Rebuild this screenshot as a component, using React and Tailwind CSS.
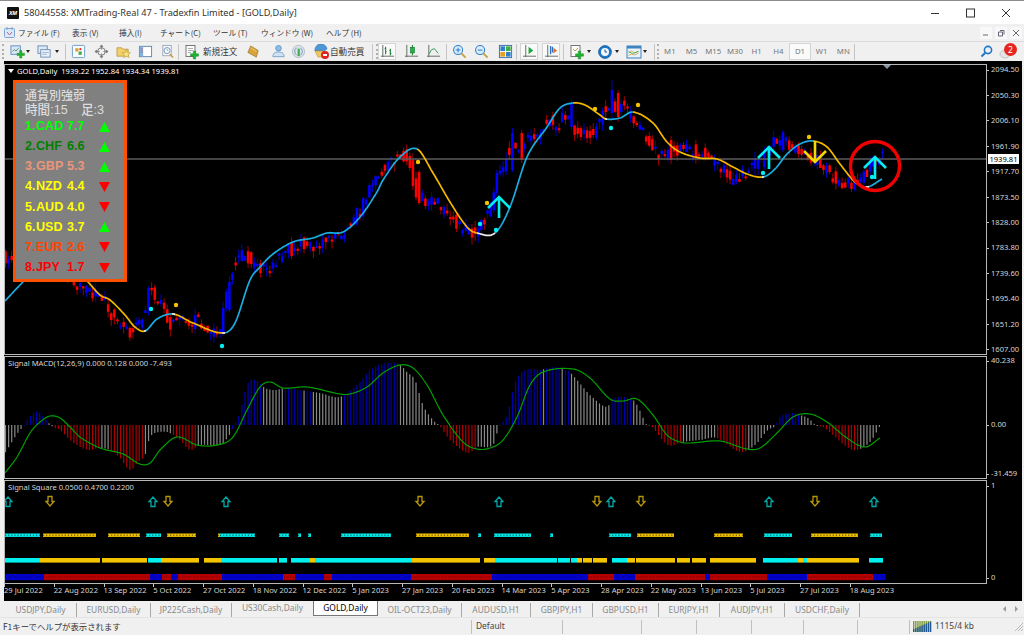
import React from "react";

// ---------- chart data (page px coordinates) ----------
const STEP = 3.11;
const BAR_X = Array.from({ length: 283 }, (_, i) => 5.5 + STEP * i);

// catmull-rom style interpolation over x
const curve = (pts) => (x) => {
  let i = 0;
  while (i < pts.length - 2 && x > pts[i + 1][0]) i++;
  const p1 = pts[i];
  const p2 = pts[i + 1];
  const p0 = pts[i - 1] || p1;
  const p3 = pts[i + 2] || p2;
  const h = p2[0] - p1[0];
  const t = Math.min(1, Math.max(0, (x - p1[0]) / h));
  const m1 = ((p2[1] - p0[1]) / (p2[0] - p0[0])) * h;
  const m2 = ((p3[1] - p1[1]) / (p3[0] - p1[0])) * h;
  const t2 = t * t;
  const t3 = t2 * t;
  return (2 * t3 - 3 * t2 + 1) * p1[1] + (t3 - 2 * t2 + t) * m1 + (-2 * t3 + 3 * t2) * p2[1] + (t3 - t2) * m2;
};

const MA_PTS = [[5,301],[20,285],[40,265],[60,265],[75,270],[88,282],[100,295],[110,300],[125,315],[135,327],[145,331],[157,319],[173,314],[193,323],[223,333],[235,323],[250,280],[260,267],[273,254],[293,242],[313,238],[327,233],[343,232],[360,217],[377,192],[383,180],[400,157],[417,149],[433,173],[450,202],[467,227],[477,233],[495,233],[510,207],[527,157],[547,127],[560,108],[573,103],[585,105],[600,115],[606,119],[620,118],[633,112],[653,123],[667,142],[680,152],[700,158],[717,159],[733,167],[747,174],[763,177],[775,169],[787,154],[800,144],[813,141],[827,147],[840,164],[855,182],[867,187],[882,179]];

const MA_GOLD = [[60,145],[173,223],[417,477],[573,606],[633,763],[813,867]];
const MA_BLUE = [[5,60],[145,173],[223,417],[495,573],[606,633],[763,813],[867,882]];
const MA_WHITE = [[477,495],[172,175],[222,225],[144,146],[762,764],[866,869],[605,607]];

const CANDLE_PTS = [[5,258],[40,245],[60,265],[75,285],[90,290],[105,298],[115,315],[125,325],[135,332],[145,320],[152,293],[158,298],[165,305],[172,322],[180,320],[190,325],[200,320],[210,328],[220,335],[226,310],[232,280],[238,262],[248,256],[256,266],[266,270],[275,268],[288,248],[295,252],[308,242],[316,246],[330,237],[342,235],[352,222],[362,212],[372,190],[385,170],[395,160],[405,155],[412,160],[418,188],[426,198],[434,200],[441,205],[448,212],[456,220],[463,228],[470,228],[478,232],[484,225],[490,215],[494,205],[498,182],[505,172],[511,150],[520,148],[533,140],[552,122],[560,128],[570,113],[580,132],[595,133],[610,105],[617,105],[626,108],[640,125],[652,142],[663,155],[673,150],[690,150],[708,155],[728,172],[738,182],[750,170],[766,157],[781,141],[794,147],[807,153],[826,166],[845,183],[862,180],[876,163],[883,160]];

// the long candles that stand out: [x, bodyTop, bodyBottom, wickTop, wickBottom, up]
const LONG_CANDLES = [
  [223,308,332,302,336,true],[229,282,310,276,312,true],[418,172,203,170,205,false],[498,173,193,170,196,true],
  [511,133,170,128,172,true],[521,133,160,130,163,false],[570,103,127,100,130,true],[611,90,113,80,120,true],
  [617,93,117,90,122,false],[672,140,160,136,164,false],[763,150,167,147,169,true],[782,132,150,130,152,true],
];

const HIST_PTS = [[5,453],[10,445],[15,437],[20,430],[24,426],[27,420],[35,412],[40,413],[48,422],[53,427],[60,430],[70,440],[80,447],[90,450],[100,448],[110,450],[120,458],[130,470],[138,462],[145,455],[150,437],[160,432],[170,433],[180,440],[190,450],[200,445],[220,445],[228,437],[235,424],[240,412],[245,392],[250,380],[258,382],[265,388],[275,390],[285,388],[300,390],[320,393],[340,397],[357,385],[373,368],[397,363],[408,373],[415,380],[423,405],[433,420],[440,426],[450,440],[468,453],[477,447],[493,445],[499,427],[507,415],[515,383],[525,370],[540,370],[553,367],[567,370],[577,380],[590,395],[607,407],[613,398],[633,400],[642,415],[645,423],[652,427],[668,445],[682,442],[700,440],[717,438],[740,452],[755,445],[768,430],[775,426],[780,417],[790,413],[800,415],[808,418],[817,426],[823,427],[833,435],[847,447],[857,450],[870,442],[880,426]];

const HIST_RANGES = [
  ["g",5,24],["b",24,46],["g",46,53],["r",53,100],["g",100,109],["r",109,143],["g",143,172],["r",172,198],["g",198,230],
  ["b",230,261],["g",261,283],["b",283,302],["g",302,307],["b",307,311],["g",311,342],["b",342,398],["g",398,438],
  ["r",438,476],["g",476,500],["b",500,541],["g",541,544],["b",544,561],["g",561,563],["b",563,570],["g",570,611],
  ["b",611,632],["g",632,650],["r",650,681],["g",681,703],["r",703,705],["g",705,715],["r",715,746],["g",746,776],
  ["b",776,801],["g",801,820],["r",820,859],["g",859,882],
];
const HIST_COLOR = { g: "#8a8a8a", b: "#0000b0", r: "#b00000" };

const SIGNAL_PTS = [[5,473],[17,457],[30,433],[40,422],[50,416],[60,418],[70,427],[80,437],[100,448],[123,454],[140,464],[150,463],[160,450],[177,437],[197,445],[217,445],[233,437],[247,410],[260,387],[270,382],[283,388],[307,387],[340,394],[350,394],[367,387],[383,373],[400,365],[413,368],[427,385],[443,415],[463,442],[477,449],[490,448],[503,440],[517,417],[530,385],[543,372],[573,369],[590,378],[610,399],[623,401],[637,399],[653,415],[667,435],[680,442],[690,443],[720,441],[747,449],[760,448],[777,433],[793,417],[810,414],[827,422],[847,438],[865,447],[880,438]];

const GOLD_DOTS = [[176,305],[418,162],[487,203],[595,109],[638,105],[809,137]];
const CYAN_DOTS = [[151,309],[222,346],[480,224],[496,230],[611,128],[763,173],[872,177]];

const C = "#00f0f0";
const Y = "#f5c400";
const DOT_ROW = [[C,5,40],[Y,43,96],[Y,108,140],[C,146,161],[Y,167,196],[Y,218,220],[C,220,255],[C,279,289],[C,298,301],[C,308,311],[C,341,391],[Y,416,469],[C,478,481],[C,494,531],[C,550,553],[C,609,631],[Y,637,674],[Y,714,743],[C,764,792],[Y,811,858],[C,870,882]];
const THICK_ROW = [[C,5,40],[Y,40,100],[Y,102,147],[C,148,161],[Y,161,199],[Y,204,221],[C,221,277],[C,279,287],[C,291,310],[Y,310,315],[C,315,412],[Y,412,480],[Y,484,495],[C,495,557],[C,558,570],[C,571,577],[Y,577,582],[Y,583,592],[Y,593,607],[C,612,627],[Y,627,635],[Y,636,675],[Y,677,690],[Y,692,706],[Y,710,756],[C,763,798],[Y,798,803],[C,803,807],[Y,807,859],[C,869,883]];
const BLUE = "#0000c8";
const RED = "#b40000";
const TREND_ROW = [[BLUE,5,44],[RED,44,150],[BLUE,150,162],[RED,162,171],[BLUE,171,178],[RED,178,222],[BLUE,222,283],[RED,283,295],[BLUE,295,324],[RED,324,332],[BLUE,332,411],[RED,411,492],[BLUE,492,588],[RED,588,614],[BLUE,614,635],[RED,635,705],[BLUE,705,710],[RED,710,767],[BLUE,767,807],[RED,807,873],[BLUE,873,885]];
const UP_ARROWS = [8,153,226,499,611,769,874];
const DOWN_ARROWS = [50,168,420,597,641,815];

// ---------- chart parts ----------
function rng(seed) {
  let s = seed;
  return () => {
    s = (s * 16807) % 2147483647;
    return s / 2147483647;
  };
}

function Candles() {
  const c = curve(CANDLE_PTS);
  const r = rng(4242);
  return BAR_X.map((x, i) => {
    const o = c(x) + (r() - 0.5) * 14;
    let cl = c(x + STEP) + (r() - 0.5) * 14;
    if (Math.abs(o - cl) < 2) cl = o + (r() > 0.5 ? 2 : -2);
    let up = cl < o;
    let top = Math.min(o, cl);
    let bot = Math.max(o, cl);
    let wt = top - r() * 7;
    let wb = bot + r() * 7;
    const long = LONG_CANDLES.find((h) => Math.abs(h[0] - x) <= STEP / 2);
    if (long) [, top, bot, wt, wb, up] = long;
    const col = up ? "#0000ff" : "#ff0000";
    const wick = up ? "#0000c0" : "#a00000";
    return (
      <g key={i}>
        <line x1={x} x2={x} y1={wt} y2={wb} stroke={wick} strokeWidth="1" />
        <rect x={x - 1.25} y={top} width="2.5" height={bot - top} fill={col} />
      </g>
    );
  });
}

const sample = (fn, from, to) => {
  const out = [];
  for (let x = from; x <= to; x += 1) out.push(`${x},${fn(x).toFixed(1)}`);
  return out.join(" ");
};

function MovingAverage() {
  const fn = curve(MA_PTS);
  return (
    <g fill="none" strokeWidth="1.7" strokeLinejoin="round">
      {MA_GOLD.map(([a, b]) => <polyline key={a} points={sample(fn, a, b)} stroke="#f5b800" />)}
      {MA_BLUE.map(([a, b]) => <polyline key={a} points={sample(fn, a, b)} stroke="#19ade2" />)}
      {MA_WHITE.map(([a, b]) => <polyline key={a} points={sample(fn, a, b)} stroke="#eeeeee" />)}
    </g>
  );
}

function BigArrow({ x, tip, dir, tail, color }) {
  const w = dir * 11;
  return (
    <g fill="none" stroke={color} strokeWidth="2.6" strokeLinecap="butt">
      <polyline points={`${x - 11},${tip + w} ${x},${tip} ${x + 11},${tip + w}`} />
      <line x1={x} x2={x} y1={tip} y2={tail} />
    </g>
  );
}

function MainChart() {
  return (
    <svg className="block w-full h-full" viewBox="5 65 981 289">
      <Candles />
      <line x1="5" x2="986" y1="159" y2="159" stroke="#5c5c5c" strokeWidth="1.6" />
      <MovingAverage />
      {GOLD_DOTS.map(([x, y]) => <circle key={x} cx={x} cy={y} r="2.2" fill="#f5c400" />)}
      {CYAN_DOTS.map(([x, y]) => <circle key={x} cx={x} cy={y} r="2.2" fill="#00f0f0" />)}
      <BigArrow x={499} tip={197} dir={1} tail={218} color="#00f0f0" />
      <BigArrow x={769} tip={147} dir={1} tail={169} color="#00f0f0" />
      <BigArrow x={875} tip={157} dir={1} tail={179} color="#00f0f0" />
      <BigArrow x={815} tip={162} dir={-1} tail={141} color="#f5d800" />
      <circle cx="875" cy="166" r="24.5" fill="none" stroke="#f00000" strokeWidth="3.4" />
      <polygon points="883,65 891,65 887,69" fill="#8a96a8" />
    </svg>
  );
}

function MacdChart() {
  const hist = curve(HIST_PTS);
  const sig = curve(SIGNAL_PTS);
  return (
    <svg className="block w-full h-full" viewBox="5 357 981 121">
      {BAR_X.filter((x) => x < 882).map((x) => {
        const range = HIST_RANGES.find(([, a, b]) => x >= a && x < b);
        return (
          <line key={x} x1={x} x2={x} y1="425" y2={hist(x)} stroke={HIST_COLOR[range ? range[0] : "g"]} strokeWidth="1.2" />
        );
      })}
      <polyline points={sample(sig, 5, 880)} fill="none" stroke="#00a000" strokeWidth="1.2" />
    </svg>
  );
}

function SquareChart() {
  return (
    <svg className="block w-full h-full" viewBox="5 481 981 102">
      {UP_ARROWS.map((x) => (
        <path key={x} d={`M${x} 497 l4 4.5 h-2 v5 h-4 v-5 h-2 z`} fill="none" stroke="#00a8a8" strokeWidth="1.3" />
      ))}
      {DOWN_ARROWS.map((x) => (
        <path key={x} d={`M${x} 506 l4 -4.5 h-2 v-5 h-4 v5 h-2 z`} fill="none" stroke="#b8960a" strokeWidth="1.3" />
      ))}
      {DOT_ROW.map(([col, a, b]) => (
        <g key={a}>
          <rect x={a} y="533.5" width={b - a} height="3.4" fill={col} />
          <line x1={a} x2={b} y1="535.2" y2="535.2" stroke="#000" strokeOpacity="0.75" strokeDasharray="1.2 1.9" />
        </g>
      ))}
      {THICK_ROW.map(([col, a, b]) => <rect key={a} x={a} y="558" width={b - a} height="4.6" fill={col} />)}
      {TREND_ROW.map(([col, a, b]) => <rect key={a} x={a} y="574" width={b - a} height="6.2" fill={col} />)}
      <line x1="5" x2="885" y1="577" y2="577" stroke="#000" strokeOpacity="0.4" strokeDasharray="1 2.1" />
    </svg>
  );
}

// ---------- strength panel ----------
const STRENGTH = [
  ["1.", "CAD", "7.7", "text-[#00ff00]", true],
  ["2.", "CHF", "6.6", "text-[#008000]", true],
  ["3.", "GBP", "5.3", "text-[#e9967a]", true],
  ["4.", "NZD", "4.4", "text-[#ffff00]", false],
  ["5.", "AUD", "4.0", "text-[#ffff00]", false],
  ["6.", "USD", "3.7", "text-[#ffff00]", true],
  ["7.", "EUR", "2.6", "text-[#ff4500]", false],
  ["8.", "JPY", "1.7", "text-[#ff0000]", false],
];

function StrengthPanel() {
  return (
    <div className="absolute left-[8px] top-[15px] w-[114px] h-[202px] bg-[#808080] border-[3.5px] border-[#ff5000] pl-[9px] pt-[5.5px] font-['Liberation_Sans','Noto_Sans_CJK_JP',sans-serif] text-[12.6px] leading-[15px]">
      <div className="text-[#dcdcdc] text-[12px] font-medium">通貨別強弱</div>
      <div className="text-[#dcdcdc] flex font-medium leading-[13px]">
        <span className="w-[56px]">時間:15</span>
        <span>足:3</span>
      </div>
      {STRENGTH.map(([n, code, val, color, up]) => (
        <div key={code} className={`flex items-center h-[20.15px] font-bold ${color}`}>
          <span className="w-[11px]">{n}</span>
          <span className="w-[31px]">{code}</span>
          <span className="w-[32px]">{val}</span>
          <svg width="11" height="10" viewBox="0 0 11 10">
            {up ? <polygon points="5.5,0 11,10 0,10" fill="#00ff00" /> : <polygon points="0,0 11,0 5.5,10" fill="#ff0000" />}
          </svg>
        </div>
      ))}
    </div>
  );
}

// ---------- panes ----------
const PRICES = ["2094.50","2050.30","2006.10","1961.90","1917.70","1873.50","1828.00","1783.80","1739.60","1695.40","1651.20","1607.00"];
const DATES = ["29 Jul 2022","22 Aug 2022","13 Sep 2022","5 Oct 2022","27 Oct 2022","18 Nov 2022","12 Dec 2022","5 Jan 2023","27 Jan 2023","20 Feb 2023","14 Mar 2023","5 Apr 2023","28 Apr 2023","22 May 2023","13 Jun 2023","5 Jul 2023","27 Jul 2023","18 Aug 2023"];

const AxisLabel = ({ children }) => (
  <div className="flex items-center h-[10px]">
    <span className="w-[2px] h-px bg-[#c8c8c8] mr-[2px]" />
    {children}
  </div>
);

function ChartArea() {
  return (
    <div className="flex-1 ml-[4px] mr-[2px] bg-black pt-[3px] flex flex-col text-[#d4d4d4] text-[7.6px] font-['Noto_Sans',sans-serif]">
      <div className="flex h-[291px]">
        <div className="relative w-[983px] border border-[#b8b8b8]">
          <MainChart />
          <div className="absolute left-[3px] top-[1px] flex items-center gap-[3px] leading-[10px] whitespace-pre text-white">
            <span className="w-0 h-0 border-x-[3px] border-x-transparent border-t-[4px] border-t-white" />
            <span>GOLD,Daily  1939.22 1952.84 1934.34 1939.81</span>
          </div>
          <StrengthPanel />
        </div>
        <div className="relative flex-1 flex flex-col justify-between pt-px">
          {PRICES.map((p) => <AxisLabel key={p}>{p}</AxisLabel>)}
          <div className="absolute left-[1px] top-[90px] w-[31px] h-[10px] bg-white text-black text-center leading-[10px]">1939.81</div>
        </div>
      </div>
      <div className="flex h-[124px] pt-[1px]">
        <div className="relative w-[983px] border border-[#b8b8b8]">
          <MacdChart />
          <div className="absolute left-[3px] top-[1px] leading-[10px]">Signal MACD(12,26,9) 0.000 0.128 0.000 -7.493</div>
        </div>
        <div className="flex-1 flex flex-col">
          <AxisLabel>40.238</AxisLabel>
          <div className="mt-[54px]"><AxisLabel>0.00</AxisLabel></div>
          <div className="mt-[39px]"><AxisLabel>-31.459</AxisLabel></div>
        </div>
      </div>
      <div className="flex h-[105px] pt-[1px]">
        <div className="relative w-[983px] border border-[#b8b8b8]">
          <SquareChart />
          <div className="absolute left-[3px] top-[1px] leading-[10px]">Signal Square 0.0500 0.4700 0.2200</div>
        </div>
        <div className="flex-1 flex flex-col justify-between pt-[1px] pb-[1px]">
          <AxisLabel>1</AxisLabel>
          <AxisLabel>0</AxisLabel>
        </div>
      </div>
      <div className="flex h-[17px]">
        {DATES.map((d) => (
          <div key={d} className="w-[49.75px] shrink-0 relative pt-[1px] leading-[11px] whitespace-nowrap">
            <span className="absolute left-0 top-0 w-px h-[3px] bg-[#c8c8c8]" />
            {d}
          </div>
        ))}
      </div>
    </div>
  );
}

// ---------- toolbar icons ----------
const Box = ({ size = 15, children }) => (
  <svg width={size} height={size} viewBox="0 0 16 16">{children}</svg>
);
const Plus = ({ x = 10, y = 10 }) => (
  <path d={`M${x - 1.2} ${y - 4}h2.4v2.8h2.8v2.4h-2.8v2.8h-2.4v-2.8h-2.8v-2.4h2.8z`} fill="#1fb52e" stroke="#0d7a18" strokeWidth=".4" />
);

const ICONS = {
  newChart: (
    <Box>
      <rect x="1" y="2" width="10" height="9" fill="#dbe8f7" stroke="#5b8dc5" />
      <path d="M2.5 8l2-2 2 1.5 2.5-3" fill="none" stroke="#3a7a3a" strokeWidth=".8" />
      <Plus x={11.5} y={11} />
    </Box>
  ),
  profiles: (
    <Box>
      <rect x="1" y="2" width="10" height="8" fill="#dbe8f7" stroke="#6d8fb5" />
      <rect x="4" y="6" width="10" height="8" fill="#eaf1fa" stroke="#6d8fb5" />
      <path d="M5.5 9h7M5.5 11h5" stroke="#8aa6c8" strokeWidth=".8" />
    </Box>
  ),
  market: (
    <Box>
      <rect x="1.5" y="1.5" width="13" height="13" rx="1" fill="#f8fbff" stroke="#6d9cc8" />
      <rect x="4.5" y="4.5" width="3.5" height="3.5" fill="#e0a030" />
      <rect x="8" y="8" width="3.5" height="3.5" fill="#3fae49" />
      <circle cx="10" cy="5.5" r="1.2" fill="#e03030" />
    </Box>
  ),
  crosshair: (
    <Box>
      <circle cx="8" cy="8" r="4" fill="none" stroke="#777" />
      <path d="M8 1v5M8 10v5M1 8h5M10 8h5M8 1l-1.5 2h3zM8 15l-1.5-2h3zM1 8l2-1.5v3zM15 8l-2-1.5v3z" stroke="#777" strokeWidth=".8" fill="#777" />
    </Box>
  ),
  folderStar: (
    <Box>
      <path d="M1 4h5l1.5 1.5H13V13H1z" fill="#f2cf6a" stroke="#b8923a" strokeWidth=".8" />
      <polygon points="11,6 12.3,9 15.5,9.3 13.1,11.4 13.9,14.6 11,13 8.1,14.6 8.9,11.4 6.5,9.3 9.7,9" fill="#f7e27a" stroke="#b8923a" strokeWidth=".6" />
    </Box>
  ),
  navigator: (
    <Box>
      <rect x="1.5" y="2.5" width="13" height="11" fill="#fff" stroke="#5e87b0" />
      <rect x="2" y="3" width="3.5" height="10" fill="#7fb2e0" />
      <path d="M3 5h2M3 7h2M3 9h2" stroke="#e05050" strokeWidth=".7" />
    </Box>
  ),
  tester: (
    <Box>
      <rect x="3" y="1.5" width="9" height="11" fill="#f5f7fb" stroke="#9aa8b8" />
      <circle cx="7.5" cy="7" r="3.2" fill="#fff" stroke="#6d8fb5" />
      <path d="M7.5 5v2h1.5" stroke="#6d8fb5" strokeWidth=".7" fill="none" />
      <path d="M10.5 11l3.5 3.5" stroke="#c69a3a" strokeWidth="1.6" />
    </Box>
  ),
  newOrder: (
    <Box size={16}>
      <rect x="2" y="1.5" width="9" height="11" fill="#fbfbfb" stroke="#777" />
      <path d="M4 4.5h5M4 6.5h5M4 8.5h3" stroke="#999" strokeWidth=".8" />
      <Plus x={10.5} y={11} />
    </Box>
  ),
  diamond: (
    <Box>
      <polygon points="5,2 13,7 11,14 2,9" fill="#d7a43c" stroke="#96702a" strokeWidth=".7" />
      <path d="M5 4l6 4" stroke="#f3d98a" strokeWidth=".8" />
    </Box>
  ),
  people: (
    <Box>
      <circle cx="8" cy="4.5" r="3" fill="#8cbce8" stroke="#4d82b5" strokeWidth=".7" />
      <path d="M2 13.5c0-4 3-5 6-5s6 1 6 5z" fill="#cfe2f5" stroke="#4d82b5" strokeWidth=".7" />
    </Box>
  ),
  signal: (
    <Box>
      <circle cx="8" cy="8" r="6.5" fill="#dfe6ee" stroke="#97a6b6" strokeWidth=".7" />
      <path d="M6 4a5 5 0 0 0 0 8M10 4a5 5 0 0 1 0 8" fill="none" stroke="#6d8fb5" />
      <rect x="7" y="5" width="2.4" height="8" fill="#3fae49" />
    </Box>
  ),
  auto: (
    <Box size={16}>
      <path d="M1 7a6 6 0 0 1 12-2l-3 2z" fill="#4d97d8" stroke="#2d6fa8" strokeWidth=".6" />
      <path d="M1 7l9 0 1 6H4z" fill="#f1c85a" stroke="#b8923a" strokeWidth=".6" />
      <circle cx="11" cy="11" r="4" fill="#e02020" />
      <rect x="9" y="10" width="4" height="2" fill="#fff" />
    </Box>
  ),
  bars: (
    <Box>
      <path d="M3 1v13M1 13h14" stroke="#5c6c5c" fill="none" />
      <path d="M6 3v8M5 5h1M6 8h1M11 5v7M10 7h1M11 10h1" stroke="#0f7a2a" strokeWidth="1.1" />
    </Box>
  ),
  candles: (
    <Box>
      <path d="M3 1v13M1 13h14" stroke="#5c6c5c" fill="none" />
      <path d="M9 1v11" stroke="#0f7a2a" />
      <rect x="7" y="3.5" width="4" height="6" fill="#21b34a" stroke="#0f7a2a" strokeWidth=".7" />
    </Box>
  ),
  lineChart: (
    <Box>
      <path d="M3 1v13M1 13h14" stroke="#5c6c5c" fill="none" />
      <path d="M3 11l3-5 3-1 4 5" stroke="#2f9a5a" fill="none" />
    </Box>
  ),
  zoomIn: (
    <Box>
      <circle cx="6.5" cy="6.5" r="4.8" fill="#d9ecfb" stroke="#2f80c8" strokeWidth="1.1" />
      <path d="M10 10l4.5 4.5" stroke="#c9a040" strokeWidth="2" />
      <path d="M4 6.5h5M6.5 4v5" stroke="#2f80c8" strokeWidth="1.1" />
    </Box>
  ),
  zoomOut: (
    <Box>
      <circle cx="6.5" cy="6.5" r="4.8" fill="#d9ecfb" stroke="#2f80c8" strokeWidth="1.1" />
      <path d="M10 10l4.5 4.5" stroke="#c9a040" strokeWidth="2" />
      <path d="M4 6.5h5" stroke="#2f80c8" strokeWidth="1.1" />
    </Box>
  ),
  tile: (
    <Box>
      <rect x="1.5" y="1.5" width="13" height="13" fill="#fff" stroke="#3b6ea8" />
      <rect x="2.5" y="2.5" width="5" height="5" fill="#2f80c8" />
      <rect x="8.5" y="2.5" width="5" height="5" fill="#3fae49" />
      <rect x="2.5" y="8.5" width="5" height="5" fill="#e5a020" />
      <rect x="8.5" y="8.5" width="5" height="5" fill="#2f80c8" />
    </Box>
  ),
  shift: (
    <Box>
      <path d="M4 1v13M1 13h14" stroke="#5c6c5c" fill="none" />
      <polygon points="7,3 12,7 7,11" fill="#1fa83a" />
    </Box>
  ),
  scroll: (
    <Box>
      <path d="M4 1v13M1 13h14" stroke="#5c6c5c" fill="none" />
      <path d="M7 2v9M9 3v6" stroke="#2f70c0" strokeWidth="1.4" />
      <polygon points="10,4 14,7 10,10" fill="#e0702a" />
    </Box>
  ),
  indicator: (
    <Box size={16}>
      <rect x="2" y="1.5" width="9" height="11" fill="#fbfbfb" stroke="#777" />
      <path d="M4 5l2 2 3-3" fill="none" stroke="#c9a040" />
      <Plus x={10.5} y={11} />
    </Box>
  ),
  clock: (
    <Box size={16}>
      <circle cx="8" cy="8" r="6.4" fill="#1c78c8" stroke="#105a9a" strokeWidth=".8" />
      <circle cx="8" cy="8" r="4" fill="#f4f8fc" />
      <path d="M8 5.5V8h2" stroke="#105a9a" fill="none" />
    </Box>
  ),
  template: (
    <Box size={16}>
      <rect x="1" y="2" width="14" height="12" fill="#e8f2fb" stroke="#3f82c0" />
      <rect x="1" y="2" width="14" height="2.5" fill="#3f82c0" />
      <path d="M2.5 9l3-2 3 2 4-2M2.5 11.5l3-1.5 3 1 4-2" fill="none" stroke="#c9a040" strokeWidth=".8" />
      <path d="M2.5 7.5l4 2 6-2" fill="none" stroke="#3fae49" strokeWidth=".8" />
    </Box>
  ),
};

const Tool = ({ w, ml, icon, active, children }) => (
  <div className={`${w} ${ml || ""} h-[17px] shrink-0 flex items-center justify-center ${active ? "bg-[#fafafa] border border-[#d4d4d4]" : ""}`}>
    {icon ? ICONS[icon] : children}
  </div>
);
const Caret = ({ cls }) => (
  <div className={`${cls} flex justify-center shrink-0`}>
    <span className="w-0 h-0 border-x-[2.5px] border-x-transparent border-t-[3px] border-t-[#222]" />
  </div>
);
const Sep = ({ ml }) => <div className={`${ml} w-px h-[16px] bg-[#c4c4c4] shrink-0`} />;
const Grip = ({ ml }) => <div className={`${ml} w-[2px] h-[15px] shrink-0 border-l-2 border-dotted border-[#b0b0b0]`} />;

const TF = ["M1","M5","M15","M30","H1","H4","D1","W1","MN"];

function Toolbar() {
  return (
    <div className="h-[20px] flex items-center border-t border-[#dcdcdc] text-[#333] text-[8.6px] font-['Noto_Sans_CJK_JP',sans-serif]">
      <Grip ml="ml-[2px]" />
      <Tool w="w-[16px]" ml="ml-[5px]" icon="newChart" />
      <Caret cls="w-[6px]" />
      <Tool w="w-[16px]" ml="ml-[5px]" icon="profiles" />
      <Caret cls="w-[6px] ml-[2px]" />
      <Sep ml="ml-[5px]" />
      <Tool w="w-[22px]" ml="ml-[1px]" icon="market" />
      <Tool w="w-[22px]" ml="ml-[1px]" icon="crosshair" />
      <Tool w="w-[22px]" icon="folderStar" />
      <Tool w="w-[22px]" icon="navigator" />
      <Tool w="w-[22px]" icon="tester" />
      <Sep />
      <Tool w="w-[22px]" ml="ml-[2px]" icon="newOrder" />
      <span className="w-[37px] shrink-0">新規注文</span>
      <Tool w="w-[22px]" ml="ml-[2px]" icon="diamond" />
      <Tool w="w-[22px]" ml="ml-[3px]" icon="people" />
      <Tool w="w-[18px]" icon="signal" />
      <Tool w="w-[22px]" ml="ml-[4px]" icon="auto" />
      <span className="w-[36px] ml-[-3px] shrink-0">自動売買</span>
      <Sep ml="ml-[6px]" />
      <Grip ml="ml-[3px]" />
      <Tool w="w-[18px]" icon="bars" active />
      <Tool w="w-[22px]" ml="ml-[4px]" icon="candles" />
      <Tool w="w-[22px]" icon="lineChart" />
      <Sep ml="ml-[2px]" />
      <Tool w="w-[22px]" ml="ml-[1px]" icon="zoomIn" />
      <Tool w="w-[22px]" icon="zoomOut" />
      <Tool w="w-[22px]" ml="ml-[2px]" icon="tile" />
      <Sep />
      <Tool w="w-[18px]" ml="ml-[3px]" icon="shift" active />
      <Tool w="w-[18px]" ml="ml-[4px]" icon="scroll" active />
      <Sep ml="ml-[3px]" />
      <Tool w="w-[18px]" ml="ml-[4px]" icon="indicator" />
      <Caret cls="w-[6px]" />
      <Tool w="w-[16px]" ml="ml-[5px]" icon="clock" />
      <Caret cls="w-[6px] ml-[1px]" />
      <Tool w="w-[16px]" ml="ml-[6px]" icon="template" />
      <Caret cls="w-[6px]" />
      <Sep ml="ml-[6px]" />
      <Grip ml="ml-[2px]" />
      {TF.map((t) => (
        <div key={t} className={`w-[21.7px] h-[17px] shrink-0 flex items-center justify-center text-[#777] text-[7.8px] font-['Noto_Sans',sans-serif] ${t === "D1" ? "bg-[#fafafa] border border-[#d4d4d4]" : ""}`}>
          {t}
        </div>
      ))}
      <Sep />
      <svg className="ml-auto" width="13" height="13" viewBox="0 0 13 13">
        <circle cx="8" cy="5" r="3.6" fill="none" stroke="#1c78c8" strokeWidth="1.6" />
        <path d="M5.5 7.5L1.5 11.5" stroke="#1c78c8" strokeWidth="2" />
      </svg>
      <div className="relative ml-[7px] mr-[8px] w-[16px] h-[16px]">
        <svg width="14" height="14" viewBox="0 0 14 14" className="absolute left-[-1px] top-[3px]">
          <ellipse cx="6" cy="7" rx="5" ry="4" fill="#e4e4e4" stroke="#c4c4c4" />
        </svg>
        <span className="absolute right-[-1px] top-[-1px] w-[13px] h-[13px] rounded-full bg-[#e5261f] text-white text-[8.5px] leading-[13px] text-center font-['Noto_Sans',sans-serif]">2</span>
      </div>
    </div>
  );
}

// ---------- window chrome ----------
const MENU = [
  ["ファイル (F)", "w-[54px]"],
  ["表示 (V)", "w-[47px]"],
  ["挿入(I)", "w-[41px]"],
  ["チャート(C)", "w-[53px]"],
  ["ツール (T)", "w-[48px]"],
  ["ウィンドウ (W)", "w-[65px]"],
  ["ヘルプ (H)", "w-[50px]"],
];

function TitleBar() {
  return (
    <div className="h-[24px] bg-white border-t border-[#8c8c8c] flex items-center text-[#333] font-['Noto_Sans',sans-serif] text-[9.2px]">
      <div className="ml-[7px] w-[12px] h-[12px] bg-[#111] rounded-[1px] text-white text-[5.5px] font-bold italic text-center leading-[12px]">XM</div>
      <span className="ml-[5px]">58044558: XMTrading-Real 47 - Tradexfin Limited - [GOLD,Daily]</span>
      <svg className="ml-auto mr-[13px]" width="80" height="12" viewBox="0 0 80 12" fill="none" stroke="#333" strokeWidth="1">
        <path d="M0 6.5h8" />
        <rect x="35.5" y="2" width="8" height="8" />
        <path d="M71 2l8 8M79 2l-8 8" />
      </svg>
    </div>
  );
}

function MenuBar() {
  return (
    <div className="h-[17px] flex items-center text-[#333] text-[7.7px] font-['Noto_Sans_CJK_JP',sans-serif]">
      <svg className="ml-[4px] mr-[3px]" width="11" height="11" viewBox="0 0 11 11">
        <rect x=".5" y="1.5" width="10" height="9" rx="1" fill="#dbe8f7" stroke="#7fa6d0" />
        <path d="M3 0v3M8 0v3" stroke="#7fa6d0" />
        <path d="M3 5l2.5 3L8 5" fill="none" stroke="#c06090" />
      </svg>
      {MENU.map(([t, w]) => <span key={t} className={`${w} shrink-0 whitespace-nowrap`}>{t}</span>)}
      <div className="ml-auto mr-[2px] flex gap-[3px]">
        {["M3 8h5", "M3.5 5h4v4h-4zM5 3.5h4v4", "M3 3l6 6M9 3l-6 6"].map((d) => (
          <svg key={d} className="bg-[#f8f8f8]" width="12" height="12" viewBox="0 0 12 12">
            <path d={d} fill="none" stroke="#667" strokeWidth="1" />
          </svg>
        ))}
      </div>
    </div>
  );
}

const TABS = [
  ["USDJPY,Daily", "w-[72px]", "ml-[5px]"],
  ["EURUSD,Daily", "w-[74px]"],
  ["JP225Cash,Daily", "w-[81px]"],
  ["US30Cash,Daily", "w-[81px]"],
  ["GOLD,Daily", "w-[65px]"],
  ["OIL-OCT23,Daily", "w-[84px]"],
  ["AUDUSD,H1", "w-[69px]"],
  ["GBPJPY,H1", "w-[62px]"],
  ["GBPUSD,H1", "w-[66px]"],
  ["EURJPY,H1", "w-[61px]"],
  ["AUDJPY,H1", "w-[65px]"],
  ["USDCHF,Daily", "w-[75px]"],
];

function TabBar() {
  return (
    <div className="h-[16px] flex text-[8.4px] font-['Noto_Sans',sans-serif] text-[#8a8a8a]">
      {TABS.map(([t, w, ml], i) => {
        const active = t === "GOLD,Daily";
        const noSep = active || TABS[i + 1]?.[0] === "GOLD,Daily";
        return (
          <div
            key={t}
            className={`${w} ${ml || ""} shrink-0 flex items-center justify-center h-[15px] ${
              active ? "bg-white text-black border border-t-0 border-[#777]" : noSep ? "" : "border-r border-[#a8a8a8] h-[11px] mt-[2px]"
            }`}
          >
            {t}
          </div>
        );
      })}
      <div className="ml-auto mr-[6px] flex items-center gap-[9px]">
        <span className="w-0 h-0 border-y-[3px] border-y-transparent border-r-[3px] border-r-[#999]" />
        <span className="w-0 h-0 border-y-[3px] border-y-transparent border-l-[3px] border-l-[#999]" />
      </div>
    </div>
  );
}

const StatusCell = ({ w, children }) => (
  <div className={`${w} shrink-0 h-[14px] border-l border-[#c0c0c0] flex items-center pl-[4px]`}>{children}</div>
);

function StatusBar() {
  return (
    <div className="h-[18px] flex items-center text-[#333] text-[8.4px] font-['Noto_Sans_CJK_JP',sans-serif] border-t border-[#e4e4e4]">
      <div className="w-[471px] pl-[3px] shrink-0">F1キーでヘルプが表示されます</div>
      <StatusCell w="w-[91px]"><span className="font-['Noto_Sans',sans-serif] text-[#444]">Default</span></StatusCell>
      <StatusCell w="w-[79px]" />
      <StatusCell w="w-[55px]" />
      <StatusCell w="w-[55px]" />
      <StatusCell w="w-[52px]" />
      <StatusCell w="w-[54px]" />
      <StatusCell w="w-[52px]" />
      <div className="border-l border-[#c0c0c0] h-[14px] pl-[3px] flex items-center gap-[3px] font-['Noto_Sans',sans-serif] text-[#444]">
        <svg width="19" height="11" viewBox="0 0 19 11">
          {Array.from({ length: 9 }, (_, i) => (
            <g key={i}>
              <rect x={i * 2.1} y="0" width="1.4" height="11" fill="#7f9a3a" />
              <rect x={i * 2.1} y={8 - i * 0.9} width="1.4" height={3 + i * 0.9} fill="#1f5a96" />
            </g>
          ))}
        </svg>
        1115/4 kb
      </div>
      <svg className="ml-auto" width="11" height="11" viewBox="0 0 11 11">
        <path d="M10 2L2 10M10 5L5 10M10 8L8 10" stroke="#b8b8b8" strokeWidth="1" />
      </svg>
    </div>
  );
}

export default function App() {
  return (
    <div className="w-[1024px] h-[635px] bg-[#f0f0f0] flex flex-col overflow-hidden">
      <TitleBar />
      <MenuBar />
      <Toolbar />
      <ChartArea />
      <TabBar />
      <StatusBar />
    </div>
  );
}
